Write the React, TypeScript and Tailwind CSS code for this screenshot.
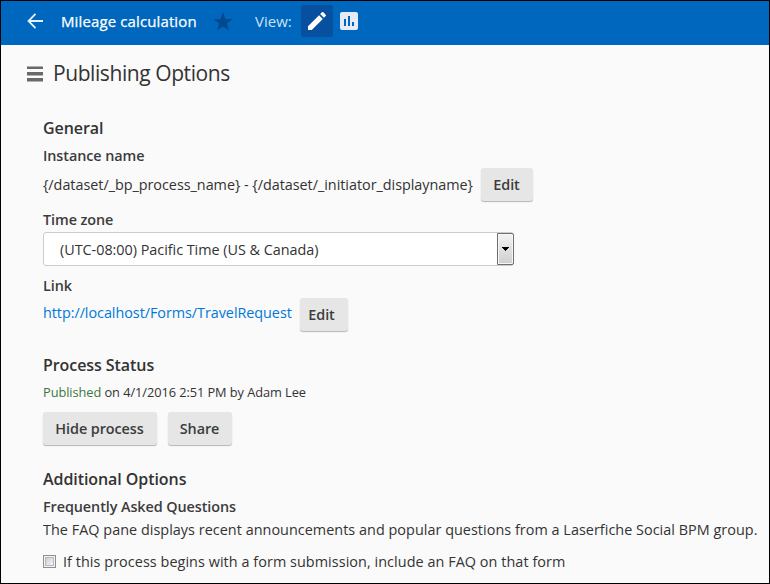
import type { ReactNode } from "react";

function Button({ children, className }: { children: ReactNode; className: string }) {
  return (
    <button
      className={`h-[33px] shrink-0 rounded-[3px] bg-[#e6e6e6] text-center text-[14.4px] font-semibold tracking-[-0.08px] text-[#3c3c3c] shadow-[0_1px_1px_rgba(0,0,0,0.28)] ${className}`}
    >
      {children}
    </button>
  );
}

function Section({ children, className }: { children: ReactNode; className: string }) {
  return <h2 className={`h-6 text-base leading-6 font-semibold tracking-[-0.07px] ${className}`}>{children}</h2>;
}

function Label({ children, className }: { children: ReactNode; className: string }) {
  return (
    <h3 className={`h-5 text-[14.4px] leading-5 font-semibold tracking-[-0.08px] text-[#3c3c3c] ${className}`}>
      {children}
    </h3>
  );
}

export default function App() {
  return (
    <div className="h-[584px] w-[770px] overflow-hidden border border-black bg-[#fafafa] font-['Open_Sans','Noto_Sans',sans-serif] text-[14.4px] whitespace-nowrap text-[#333]">
      <header className="flex h-11 items-center bg-[#0067bf] pb-1 text-white">
        <svg className="ml-[26px] shrink-0" width="17" height="16" viewBox="0 0 17 16" fill="none" stroke="#e5f0fa" strokeWidth="1.8">
          <path d="M8.5 .8 1.5 8l7 7.2M1.5 8H16" />
        </svg>
        <h1 className="ml-[17px] w-[136px] text-[15px] tracking-[0.12px] [-webkit-text-stroke:0.25px_#fff]">Mileage calculation</h1>
        <svg className="ml-4 shrink-0" width="20" height="19" viewBox="0 0 20 19" fill="#034990">
          <path d="m10 0 2.4 6.9 7.3.1-5.8 4.5 2.1 7L10 14.4l-6 4.1 2.1-7L.3 7l7.3-.1Z" />
        </svg>
        <span className="ml-[22px] w-[37px] text-[15px] text-[#cce1f2]">View:</span>
        <button className="ml-[9px] flex h-8 w-8 items-center justify-center rounded-[2px] bg-[#0750a0]">
          <svg width="24" height="24" viewBox="0 0 24 24" fill="#fff">
            <path d="M3 17.25V21h3.75L17.81 9.94l-3.75-3.75L3 17.25ZM20.71 7.04a1 1 0 0 0 0-1.41l-2.34-2.34a1 1 0 0 0-1.41 0l-1.83 1.83 3.75 3.75 1.83-1.83Z" />
          </svg>
        </button>
        <svg className="ml-[7px]" width="18" height="18" viewBox="0 0 18 18">
          <rect width="18" height="18" rx="2" fill="#e5ecf7" />
          <path d="M4 7h2v7H4zM8 4h2v10H8zM12 10h2v4h-2z" fill="#0067bf" />
        </svg>
      </header>

      <div className="flex h-[58px] items-center">
        <svg className="ml-[26px] shrink-0" width="16" height="16" viewBox="0 0 16 16">
          <path d="M0 0h16v3H0zM0 6h16v3H0zM0 12h16v3H0z" fill="#686868" />
          <path d="M0 0h16v1H0zM0 9h16v1H0zM0 15h16v1H0z" fill="#b0b0b0" />
        </svg>
        <h1 className="ml-[10px] pb-0.5 text-[21px] leading-7 tracking-[-0.42px]">Publishing Options</h1>
      </div>

      <main className="pl-[42px]">
        <Section className="mt-[13px]">General</Section>
        <Label className="mt-1.5">Instance name</Label>
        <div className="mt-0.5 flex h-[33px] items-center">
          <span className="w-[430px] tracking-[-0.03px]">{"{/dataset/_bp_process_name} - {/dataset/_initiator_displayname}"}</span>
          <Button className="ml-2 w-[52px] pr-px">Edit</Button>
        </div>
        <Label className="mt-[9px]">Time zone</Label>
        <div className="mt-0.5 flex h-[34px] w-[471px] items-center rounded-[3px] border border-[#ccc] bg-white pl-4">
          <span className="grow pt-0.5 tracking-[-0.03px]">(UTC-08:00) Pacific Time (US &amp; Canada)</span>
          <span className="-mr-px flex h-8 w-[17px] items-center justify-center rounded-r-[2px] border border-[#707070] bg-linear-to-b from-[#f3f3f3] to-[#cfcfcf] shadow-[inset_0_0_0_1px_#f6f6f6]">
            <svg width="7" height="4" viewBox="0 0 7 4" shapeRendering="crispEdges">
              <path d="M0 0h7L3.5 4Z" />
            </svg>
          </span>
        </div>
        <Label className="mt-[10px]">Link</Label>
        <div className="mt-0.5 flex h-[33px] items-center">
          <a className="w-[249px] pb-[3px] tracking-[-0.05px] text-[#0077d9]">http://localhost/Forms/TravelRequest</a>
          <Button className="ml-2 w-12 pr-[5px]">Edit</Button>
        </div>

        <Section className="mt-[22px]">Process Status</Section>
        <p className="mt-[5px] h-5 text-[12.8px] leading-5 tracking-[-0.065px]">
          <span className="text-[#3c763d]">Published</span> on 4/1/2016 2:51 PM by Adam Lee
        </p>
        <div className="mt-[10px] flex gap-[11px]">
          <Button className="w-[114px] pr-px">Hide process</Button>
          <Button className="w-16 pr-px">Share</Button>
        </div>

        <Section className="mt-[22px]">Additional Options</Section>
        <Label className="mt-1.5">Frequently Asked Questions</Label>
        <p className="mt-[3px] h-5 leading-5 tracking-[0.035px]">
          The FAQ pane displays recent announcements and popular questions from a Laserfiche Social BPM group.
        </p>
        <label className="mt-[11px] flex h-5 items-center">
          <span className="h-[13px] w-[13px] border border-[#8e8f8f] bg-[#f4f4f4] p-px">
            <span className="block h-[9px] w-[9px] border border-[#b5b9be] bg-linear-to-br from-[#cbcfd5] to-[#f6f6f6]" />
          </span>
          <span className="ml-[7px] pt-0.5 tracking-[0.06px]">If this process begins with a form submission, include an FAQ on that form</span>
        </label>
      </main>
    </div>
  );
}
